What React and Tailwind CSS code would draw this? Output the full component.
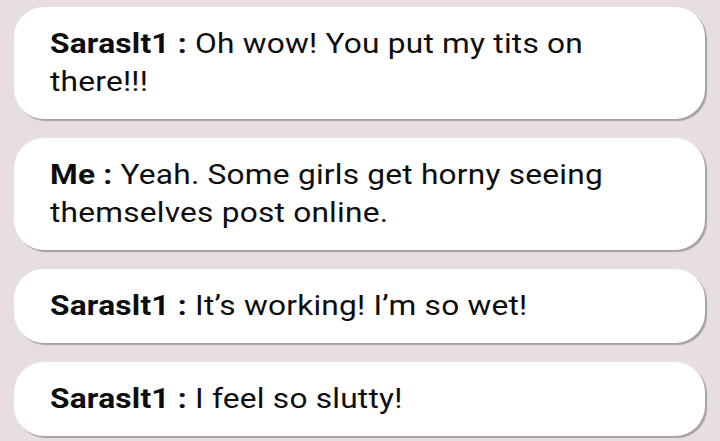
const messages = [
  { from: "Saraslt1", text: "Oh wow! You put my tits on there!!!" },
  { from: "Me", text: "Yeah. Some girls get horny seeing themselves post online." },
  { from: "Saraslt1", text: "It’s working! I’m so wet!" },
  { from: "Saraslt1", text: "I feel so slutty!" },
];

export default function App() {
  return (
    <div
      className="w-[720px] h-[441px] overflow-hidden bg-[#e7dfdf] pt-[7px] pl-[14px] pr-[15px] flex flex-col gap-[19px]"
      style={{ fontFamily: "Roboto, 'Liberation Sans', sans-serif" }}
    >
      {messages.map((m, i) => (
        <div
          key={i}
          className="bg-white rounded-[30px] pl-[36px] pr-[48px] py-[18px] shadow-[2px_2px_1px_rgba(0,0,0,0.28)]"
        >
          {/* the source screenshot is stretched sideways */}
          <p className="w-[88.5%] origin-left scale-x-[1.13] text-[28px] leading-[38px] tracking-[0.2px] text-[#0d0d0d]">
            <span className="font-bold">{m.from} : </span>
            {m.text}
          </p>
        </div>
      ))}
    </div>
  );
}
